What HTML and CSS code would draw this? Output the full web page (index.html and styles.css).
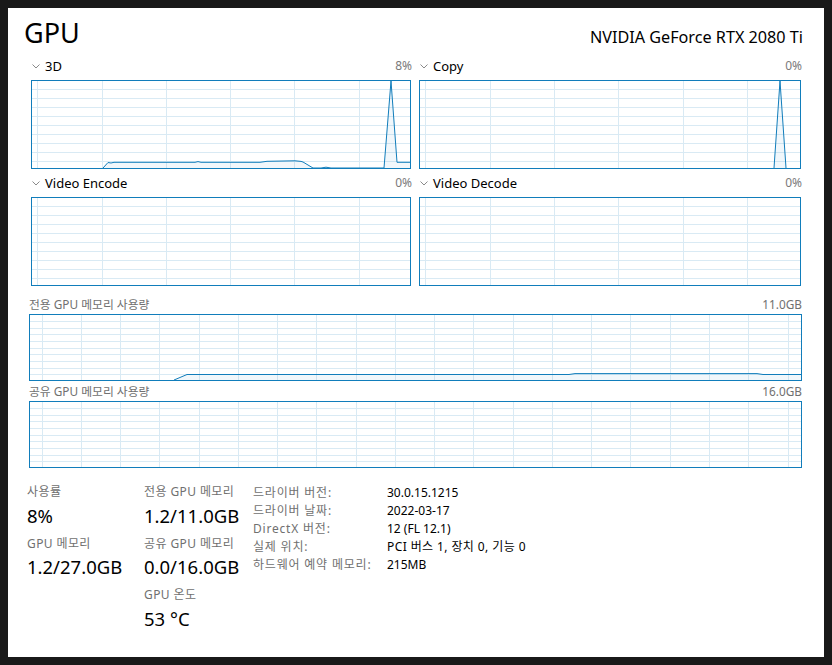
FILE: index.html
```html
<!DOCTYPE html>
<html lang="ko">
<head>
<meta charset="utf-8">
<title>GPU</title>
<link rel="stylesheet" href="styles.css">
</head>
<body>
<div class="window">
  <header class="head">
    <h1 class="title">GPU</h1>
    <div class="model">NVIDIA GeForce RTX 2080 Ti</div>
  </header>

  <section class="engines">
    <div class="engine">
      <div class="eng-head">
        <svg class="chev" width="8" height="5" viewBox="0 0 8 5"><path d="M0.5 0.5L4 4L7.5 0.5" fill="none" stroke="#8a8a8a" stroke-width="1"/></svg>
        <span class="eng-name">3D</span>
        <span class="eng-pct">8%</span>
      </div>
      <svg class="graph graph-l" viewBox="0 0 380 89">
        <path class="grid" d="M6.5 1V88M71.5 1V88M135.5 1V88M199.5 1V88M263.5 1V88M328.5 1V88M1 9.5H379M1 18.5H379M1 27.5H379M1 36.5H379M1 45.5H379M1 54.5H379M1 63.5H379M1 72.5H379M1 81.5H379"/>
        <path class="area" d="M72 88L77 82.5L80 83L83 82.3L164 82.3L167 81.6L170 82.3L229 82.3L236 81.3L264 80.8L270 81.4L272 82L282 88L290 88L295 87.2L300 88L353 88L360 1L366 82.3L380 82.3L380 88Z"/>
        <path class="line" d="M72 88L77 82.5L80 83L83 82.3L164 82.3L167 81.6L170 82.3L229 82.3L236 81.3L264 80.8L270 81.4L272 82L282 88L290 88L295 87.2L300 88L353 88L360 1L366 82.3L380 82.3"/>
        <rect class="frame" x="0.5" y="0.5" width="379" height="88"/>
      </svg>
    </div>
    <div class="engine">
      <div class="eng-head">
        <svg class="chev" width="8" height="5" viewBox="0 0 8 5"><path d="M0.5 0.5L4 4L7.5 0.5" fill="none" stroke="#8a8a8a" stroke-width="1"/></svg>
        <span class="eng-name">Copy</span>
        <span class="eng-pct">0%</span>
      </div>
      <svg class="graph graph-r" viewBox="0 0 382 89">
        <path class="grid" d="M6.5 1V88M71.5 1V88M135.5 1V88M199.5 1V88M264.5 1V88M328.5 1V88M1 9.5H381M1 18.5H381M1 27.5H381M1 36.5H381M1 45.5H381M1 54.5H381M1 63.5H381M1 72.5H381M1 81.5H381"/>
        <path class="area" d="M355 88L361 1L367 88Z"/>
        <path class="line" d="M355 88L361 1L367 88"/>
        <rect class="frame" x="0.5" y="0.5" width="381" height="88"/>
      </svg>
    </div>
    <div class="engine">
      <div class="eng-head">
        <svg class="chev" width="8" height="5" viewBox="0 0 8 5"><path d="M0.5 0.5L4 4L7.5 0.5" fill="none" stroke="#8a8a8a" stroke-width="1"/></svg>
        <span class="eng-name">Video Encode</span>
        <span class="eng-pct">0%</span>
      </div>
      <svg class="graph graph-l" viewBox="0 0 380 89">
        <path class="grid" d="M6.5 1V88M71.5 1V88M135.5 1V88M199.5 1V88M263.5 1V88M328.5 1V88M1 9.5H379M1 18.5H379M1 27.5H379M1 36.5H379M1 45.5H379M1 54.5H379M1 63.5H379M1 72.5H379M1 81.5H379"/>
        <rect class="frame" x="0.5" y="0.5" width="379" height="88"/>
      </svg>
    </div>
    <div class="engine">
      <div class="eng-head">
        <svg class="chev" width="8" height="5" viewBox="0 0 8 5"><path d="M0.5 0.5L4 4L7.5 0.5" fill="none" stroke="#8a8a8a" stroke-width="1"/></svg>
        <span class="eng-name">Video Decode</span>
        <span class="eng-pct">0%</span>
      </div>
      <svg class="graph graph-r" viewBox="0 0 382 89">
        <path class="grid" d="M6.5 1V88M71.5 1V88M135.5 1V88M199.5 1V88M264.5 1V88M328.5 1V88M1 9.5H381M1 18.5H381M1 27.5H381M1 36.5H381M1 45.5H381M1 54.5H381M1 63.5H381M1 72.5H381M1 81.5H381"/>
        <rect class="frame" x="0.5" y="0.5" width="381" height="88"/>
      </svg>
    </div>
  </section>

  <section class="mem">
    <div class="mem-head"><span>전용 GPU 메모리 사용량</span><span>11.0GB</span></div>
    <svg class="mem-graph" viewBox="0 0 773 67">
      <path class="grid" d="M13.5 1V66M52.5 1V66M91.5 1V66M130.5 1V66M170.5 1V66M209.5 1V66M248.5 1V66M287.5 1V66M327.5 1V66M366.5 1V66M405.5 1V66M444.5 1V66M484.5 1V66M523.5 1V66M562.5 1V66M601.5 1V66M641.5 1V66M680.5 1V66M719.5 1V66M759.5 1V66M1 7.5H772M1 14.5H772M1 20.5H772M1 27.5H772M1 34.5H772M1 40.5H772M1 47.5H772M1 54.5H772M1 60.5H772"/>
      <path class="area" d="M145 66L158 60.5L540 60.5L546 59.6L728 59.6L734 60.5L773 60.5L773 66Z"/>
      <path class="line" d="M145 66L158 60.5L540 60.5L546 59.6L728 59.6L734 60.5L773 60.5"/>
      <rect class="frame" x="0.5" y="0.5" width="772" height="66"/>
    </svg>
    <div class="mem-head"><span>공유 GPU 메모리 사용량</span><span>16.0GB</span></div>
    <svg class="mem-graph" viewBox="0 0 773 67">
      <path class="grid" d="M13.5 1V66M52.5 1V66M91.5 1V66M130.5 1V66M170.5 1V66M209.5 1V66M248.5 1V66M287.5 1V66M327.5 1V66M366.5 1V66M405.5 1V66M444.5 1V66M484.5 1V66M523.5 1V66M562.5 1V66M601.5 1V66M641.5 1V66M680.5 1V66M719.5 1V66M759.5 1V66M1 7.5H772M1 14.5H772M1 20.5H772M1 27.5H772M1 34.5H772M1 40.5H772M1 47.5H772M1 54.5H772M1 60.5H772"/>
      <rect class="frame" x="0.5" y="0.5" width="772" height="66"/>
    </svg>
  </section>

  <section class="stats">
    <div class="stat-col">
      <div class="stat">
        <div class="stat-label">사용률</div>
        <div class="stat-value">8%</div>
      </div>
      <div class="stat">
        <div class="stat-label">GPU 메모리</div>
        <div class="stat-value">1.2/27.0GB</div>
      </div>
    </div>
    <div class="stat-col">
      <div class="stat">
        <div class="stat-label">전용 GPU 메모리</div>
        <div class="stat-value">1.2/11.0GB</div>
      </div>
      <div class="stat">
        <div class="stat-label">공유 GPU 메모리</div>
        <div class="stat-value">0.0/16.0GB</div>
      </div>
      <div class="stat">
        <div class="stat-label">GPU 온도</div>
        <div class="stat-value">53 °C</div>
      </div>
    </div>
    <dl class="info">
      <dt>드라이버 버전:</dt><dd>30.0.15.1215</dd>
      <dt>드라이버 날짜:</dt><dd>2022-03-17</dd>
      <dt>DirectX 버전:</dt><dd>12 (FL 12.1)</dd>
      <dt>실제 위치:</dt><dd class="spaced">PCI 버스 1, 장치 0, 기능 0</dd>
      <dt>하드웨어 예약 메모리:</dt><dd>215MB</dd>
    </dl>
  </section>
</div>
</body>
</html>
```

FILE: styles.css
```css
html, body {
  margin: 0;
  padding: 0;
  background: #191919;
}

body {
  font-family: "Noto Sans", "Noto Sans CJK KR", sans-serif;
  color: #000;
}

.window {
  margin: 8px;
  width: 816px;
  height: 649px;
  box-sizing: border-box;
  background: #fff;
  padding: 7px 21px 0 16px;
  overflow: hidden;
}

/* header */
.head {
  display: flex;
  justify-content: space-between;
  align-items: baseline;
  height: 36px;
}

.title {
  margin: 0;
  font-size: 27px;
  font-weight: 400;
  line-height: 36px;
}

.model {
  font-size: 16.2px;
  line-height: 22px;
}

/* engine graphs */
.engines {
  margin: 6px 0 0 7px;
  display: grid;
  grid-template-columns: 381px 383px;
  column-gap: 7px;
  row-gap: 5px;
}

.eng-head {
  display: flex;
  align-items: center;
  height: 18px;
  margin-bottom: 5px;
  font-size: 13px;
  line-height: 18px;
}

.chev {
  display: block;
  margin: 1px 5px 0 1px;
}

.eng-pct {
  margin-left: auto;
  font-size: 12px;
  color: #7a7a7a;
}

.graph {
  display: block;
  height: 89px;
}

.graph-l { width: 380px; }
.graph-r { width: 382px; }

.grid {
  fill: none;
  stroke: #d9eaf4;
  stroke-width: 1;
}

.area {
  fill: rgba(17, 125, 187, 0.06);
  stroke: none;
}

.line {
  fill: none;
  stroke: #117dbb;
  stroke-width: 1;
}

.frame {
  fill: none;
  stroke: #117dbb;
  stroke-width: 1;
}

/* memory graphs */
.mem {
  margin: 10px 0 0 5px;
  width: 773px;
  display: flex;
  flex-direction: column;
  gap: 2px;
}

.mem-head {
  display: flex;
  justify-content: space-between;
  height: 16px;
  font-size: 11.8px;
  line-height: 16px;
  color: #707070;
}

.mem-graph {
  display: block;
  width: 773px;
  height: 67px;
}

/* stats */
.stats {
  margin: 16px 0 0 3px;
  display: grid;
  grid-template-columns: 117px 109px auto;
  align-items: start;
}

.stat {
  margin-bottom: 8px;
}

.stat-label {
  font-size: 12px;
  line-height: 16px;
  color: #707070;
  letter-spacing: 0.4px;
  white-space: nowrap;
}

.stat-value {
  margin-top: 3.5px;
  font-size: 18.5px;
  line-height: 24px;
  white-space: nowrap;
}

.info {
  margin: 0;
  display: grid;
  grid-template-columns: 134px auto;
  grid-auto-rows: 18px;
  line-height: 18px;
}

.info dt {
  font-size: 12px;
  color: #707070;
  letter-spacing: 0.8px;
  white-space: nowrap;
}

.info dd {
  margin: 0;
  font-size: 12px;
  white-space: nowrap;
}

.info dd.spaced {
  letter-spacing: 0.4px;
}
```
